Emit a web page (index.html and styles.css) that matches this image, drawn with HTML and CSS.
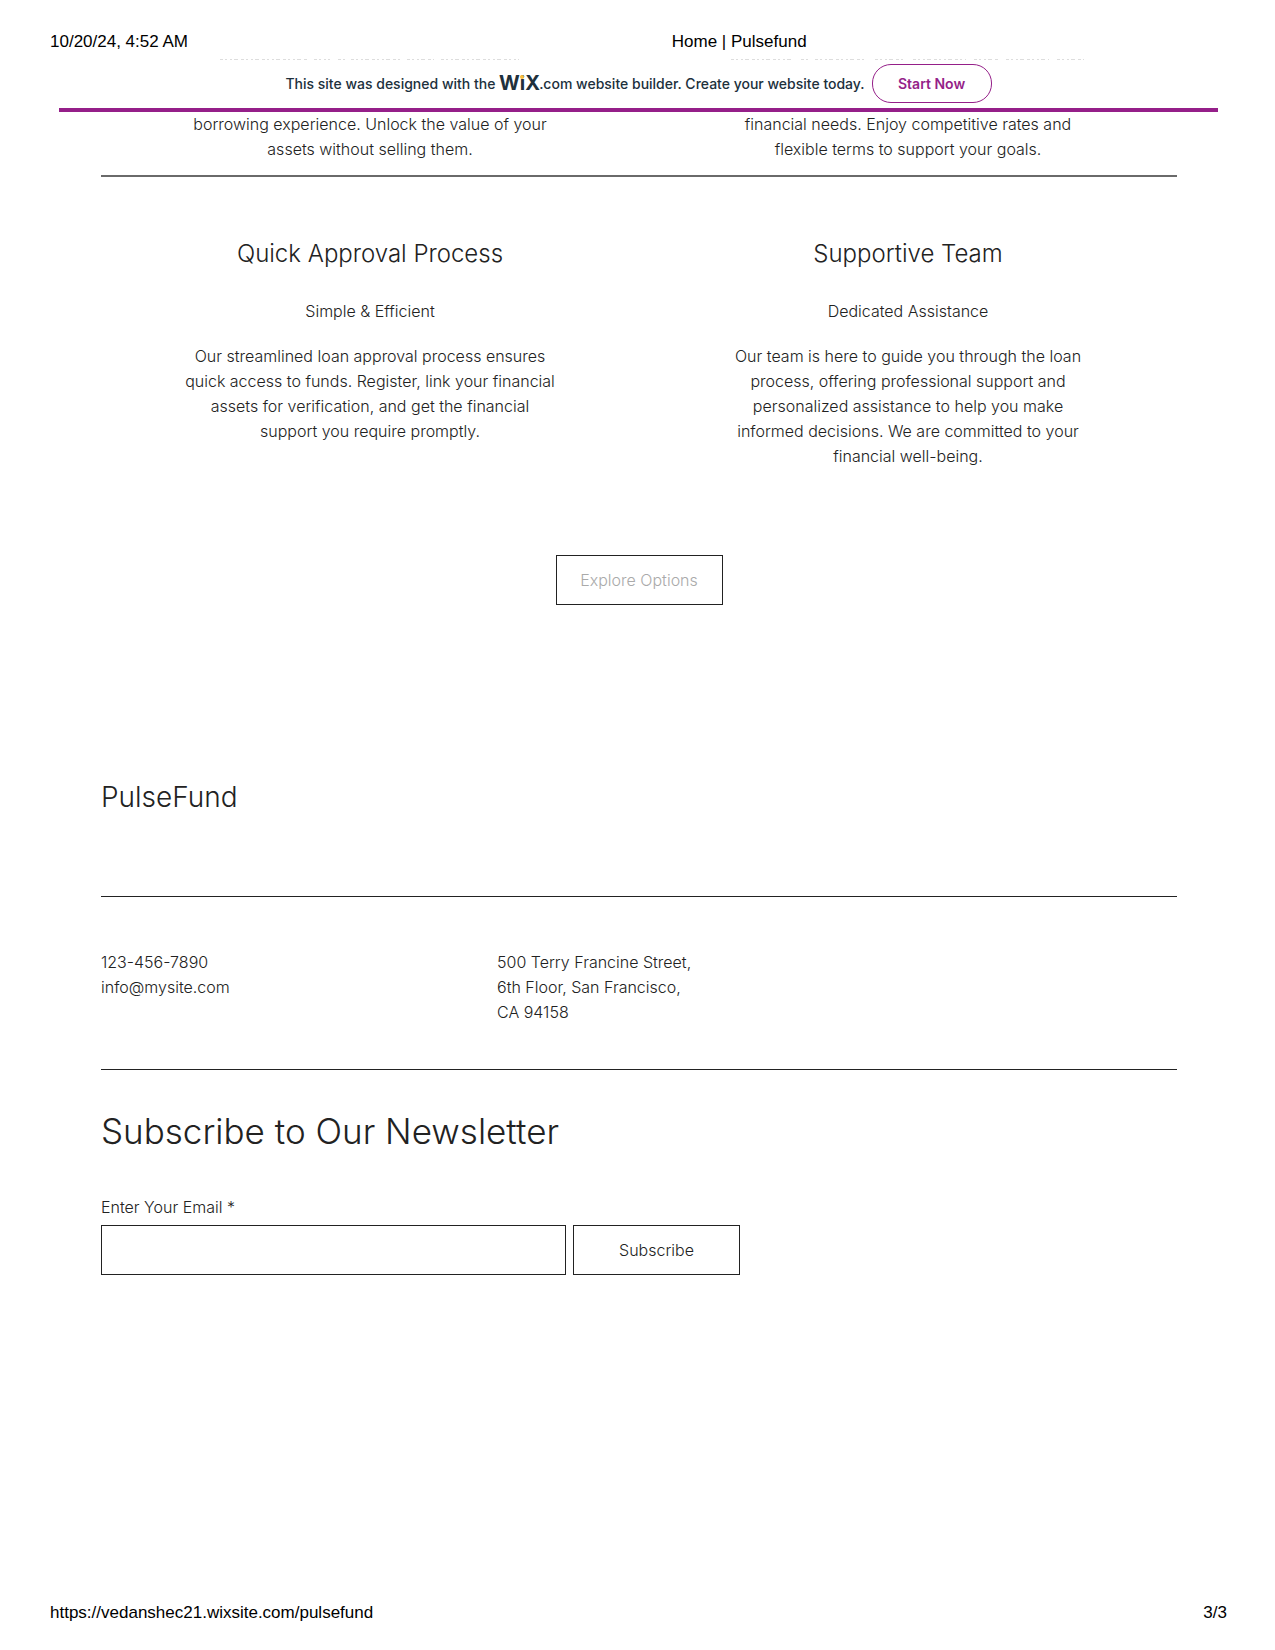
FILE: index.html
```
<!DOCTYPE html>
<html lang="en">
<head>
<meta charset="utf-8">
<meta name="viewport" content="width=device-width, initial-scale=1">
<title>Home | Pulsefund</title>
<link rel="stylesheet" href="styles.css">
</head>
<body>
<header class="sheet-head">
  <span>10/20/24, 4:52 AM</span>
  <span>Home | Pulsefund</span>
</header>

<!-- Tips of the text line that the banner cuts off -->
<div class="cut-line" aria-hidden="true">
  <svg class="cut-marks" width="300" height="1" viewBox="0 0 300 1"><path d="M0 .5H88M94 .5H110M118 .5H125M131 .5H181M187 .5H214M221 .5H299"/></svg>
  <svg class="cut-marks" width="354" height="1" viewBox="0 0 354 1"><path d="M0 .5H63M70 .5H77M84 .5H135M144 .5H173M182 .5H235M243 .5H268M275 .5H318M326 .5H353"/></svg>
</div>

<div class="banner">
  <p class="banner-text">This site was designed with the
    <svg class="wix" width="40" height="16" viewBox="0 0 40 16" role="img" aria-label="Wix"><text class="wix-word" x="0" y="15">WiX</text><circle class="wix-dot" cx="23" cy="2" r="2"/></svg>.com website builder. Create your website today.</p>
  <a class="start" href="#start">Start Now</a>
</div>

<main class="content">
  <section class="features features-cut">
    <p class="feature-text">borrowing experience. Unlock the value of your assets without selling them.</p>
    <p class="feature-text">financial needs. Enjoy competitive rates and flexible terms to support your goals.</p>
  </section>

  <section class="features">
    <article class="feature">
      <h2 class="feature-title">Quick Approval Process</h2>
      <p class="feature-sub">Simple &amp; Efficient</p>
      <p class="feature-text">Our streamlined loan approval process ensures quick access to funds. Register, link your financial assets for verification, and get the financial support you require promptly.</p>
    </article>
    <article class="feature">
      <h2 class="feature-title">Supportive Team</h2>
      <p class="feature-sub">Dedicated Assistance</p>
      <p class="feature-text">Our team is here to guide you through the loan process, offering professional support and personalized assistance to help you make informed decisions. We are committed to your financial well-being.</p>
    </article>
  </section>

  <button class="btn btn-explore" type="button">Explore Options</button>

  <footer class="site-foot">
    <p class="brand">PulseFund</p>
    <div class="contact">
      <p>123-456-7890<br><a class="mail" href="mailto:info@mysite.com">info@mysite.com</a></p>
      <address class="address">500 Terry Francine Street,<br>6th Floor, San Francisco,<br>CA 94158</address>
    </div>
    <form class="newsletter">
      <h2 class="newsletter-title">Subscribe to Our Newsletter</h2>
      <label for="email">Enter Your Email *</label>
      <div class="fields">
        <input class="email" id="email" type="email" required>
        <button class="btn" type="submit">Subscribe</button>
      </div>
    </form>
  </footer>
</main>

<div class="sheet-foot">
  <span>https://vedanshec21.wixsite.com/pulsefund</span>
  <span>3/3</span>
</div>
</body>
</html>
```
FILE: styles.css
```
* {
  box-sizing: border-box;
}

body {
  margin: 0;
  min-height: 100vh;
  display: flex;
  flex-direction: column;
  background: #fff;
  color: #222;
  font: 300 16px/25px Inter, "Liberation Sans", sans-serif;
}

h2,
p {
  margin: 0;
  font-weight: 300;
}

.sheet-head,
.sheet-foot {
  padding: 0 48px 0 50px;
  color: #000;
  font: 400 17px/20px "Liberation Sans", Arial, sans-serif;
}

.sheet-head {
  display: grid;
  grid-template-columns: 28fr 25fr;
  padding-top: 32px;
  padding-bottom: 7px;
}

.sheet-foot {
  display: flex;
  justify-content: space-between;
  padding-bottom: 27px;
}

.cut-line {
  display: grid;
  grid-template-columns: 1fr 1fr;
  justify-items: center;
  padding: 0 98px 0 101px;
}

.cut-marks {
  display: block;
}

.cut-marks path {
  stroke: #ddd;
  stroke-dasharray: 3 2 2 3 2 2 4 3;
}

.banner {
  display: flex;
  justify-content: center;
  align-items: center;
  gap: 7px;
  margin: 0 57px 0 59px;
  padding: 4px 0 5px;
  border-bottom: 4px solid #951f89;
}

.banner-text {
  color: #20303c;
  font-size: 14px;
  font-weight: 500;
}

.wix {
  overflow: visible;
  vertical-align: -2px;
}

.wix-word {
  fill: #20303c;
  font: 700 20px Inter, sans-serif;
}

.wix-dot {
  fill: #fbbd3b;
}

.start {
  width: 120px;
  border: 1px solid #951f89;
  border-radius: 19px;
  color: #951f89;
  font-size: 14px;
  font-weight: 600;
  line-height: 37px;
  text-align: center;
  text-decoration: none;
}

.content {
  flex: 1;
  display: flex;
  flex-direction: column;
  padding: 0 98px 0 101px;
}

.features {
  display: grid;
  grid-template-columns: 1fr 1fr;
  justify-items: center;
  padding-top: 61px;
  text-align: center;
}

.features-cut {
  padding: 0 0 13px;
  border-bottom: 2px solid #6a6a6a;
}

.feature-title {
  font-size: 24px;
  line-height: 32px;
}

.feature-sub {
  margin: 29px 0 20px;
}

.feature-text {
  max-width: 376px;
}

.btn {
  width: 167px;
  height: 50px;
  padding: 0;
  border: 1px solid #222;
  background: #fff;
  color: inherit;
  font: inherit;
}

.btn-explore {
  align-self: center;
  margin: 86px 0 176px;
  color: #aaa;
}

.brand {
  padding-bottom: 83px;
  border-bottom: 1px solid #222;
  font-size: 28px;
  line-height: 32px;
}

.contact {
  display: grid;
  grid-template-columns: 396px 1fr;
  padding: 53px 0 44px;
  border-bottom: 1px solid #222;
}

.mail {
  color: inherit;
  text-decoration: none;
}

.address {
  font-style: normal;
}

.newsletter-title {
  margin: 41px 0 44px;
  font-size: 35px;
  line-height: 40px;
}

.newsletter label {
  display: block;
}

.fields {
  display: flex;
  gap: 7px;
  margin-top: 5px;
}

.email {
  width: 465px;
  height: 50px;
  padding: 0 12px;
  border: 1px solid #222;
  border-radius: 0;
  background: #fff;
  color: inherit;
  font: inherit;
}
```
